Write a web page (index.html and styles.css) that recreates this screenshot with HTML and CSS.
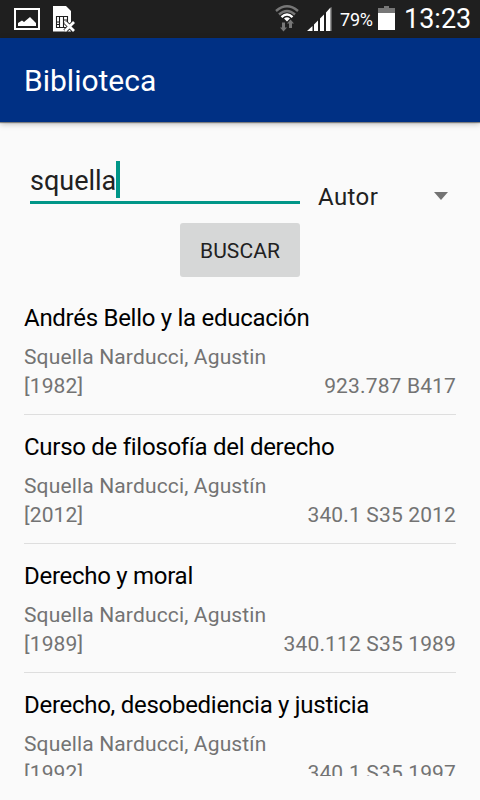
FILE: index.html
```html
<!DOCTYPE html>
<html lang="es">
<head>
    <meta charset="UTF-8">
    <title>Biblioteca</title>
    <link rel="stylesheet" href="styles.css">
</head>
<body>
    <div class="status-bar">
        <svg class="icon-image" width="26" height="22" viewBox="0 0 26 22">
            <path d="M1 1h24v20H1z" fill="none" stroke="#fff" stroke-width="2"/>
            <path d="M4 18v-3l4-2.500 2 1.500 6-5 3 3 3 3v3z" fill="#fff"/>
        </svg>
        <svg class="icon-sim" width="22" height="26" viewBox="0 0 22 26">
            <path d="M0 0h13l5 5v20.500H0z" fill="#fff"/>
            <path d="M3.500 10.500h11v11h-11zM6.500 10.500v11M10.500 10.500v11M3.500 16H6.500M10.500 14h4M3.500 18.500H6.500" fill="none" stroke="#1f1f1f" stroke-width="1.100"/>
            <path d="M12 16l9 9M21 16l-9 9" stroke="#1f1f1f" stroke-width="4.500"/>
            <path d="M12 16l9 9M21 16l-9 9" stroke="#fff" stroke-width="2.800"/>
        </svg>
        <svg class="icon-wifi" width="24" height="27" viewBox="0 0 24 27">
            <g fill="none" stroke-width="2.400">
                <path d="M1 6Q12-3.500 23 6" stroke="#777"/>
                <path d="M4 9.500Q12 2.500 20 9.500" stroke="#777"/>
                <path d="M6.500 12.200Q12 7 17.500 12.200" stroke="#fff"/>
            </g>
            <path d="M9 13.500q3-2.500 6 0l-3 3z" fill="#fff"/>
            <path d="M7 17.500h3v5h2L8.500 26.500 5 22.500h2zM14 23v-4.500h-2L15.500 14.500l3.500 4h-2V23z" fill="#777"/>
        </svg>
        <svg class="icon-signal" width="25" height="24" viewBox="0 0 25 24">
            <path d="M0 24l5.500-5V24zM7 24v-6.500l4-4V24zM13 24V11.500l4-4V24zM19 24V5.500L23 1v23z" fill="#fff"/>
            <path d="M23 1l1.500-1v24H23z" fill="#999"/>
        </svg>
        <span class="battery-level">79%</span>
        <svg class="icon-battery" width="17" height="24" viewBox="0 0 17 24">
            <path d="M6 0h5v2h6v5H0V2h6z" fill="#777"/>
            <path d="M0 7h17v17H0z" fill="#fff"/>
        </svg>
        <span class="clock">13:23</span>
    </div>

    <header class="toolbar">
        <h1>Biblioteca</h1>
    </header>

    <main class="content">
        <div class="search">
            <div class="search-input"><span>squella</span><i class="cursor"></i></div>
            <div class="spinner">
                <span>Autor</span>
                <i class="arrow"></i>
            </div>
        </div>
        <button class="search-button" type="button">BUSCAR</button>

        <ul class="results">
            <li>
                <h2>Andrés Bello y la educación</h2>
                <p>Squella Narducci, Agustin</p>
                <p class="detail"><span>[1982]</span><span>923.787 B417</span></p>
            </li>
            <li>
                <h2>Curso de filosofía del derecho</h2>
                <p>Squella Narducci, Agustín</p>
                <p class="detail"><span>[2012]</span><span>340.1 S35 2012</span></p>
            </li>
            <li>
                <h2>Derecho y moral</h2>
                <p>Squella Narducci, Agustin</p>
                <p class="detail"><span>[1989]</span><span>340.112 S35 1989</span></p>
            </li>
            <li>
                <h2>Derecho, desobediencia y justicia</h2>
                <p>Squella Narducci, Agustín</p>
                <p class="detail"><span>[1992]</span><span>340.1 S35 1997</span></p>
            </li>
        </ul>
    </main>
</body>
</html>
```
FILE: styles.css
```css
* {
    box-sizing: border-box;
}
body {
    display: flex;
    flex-direction: column;
    height: 800px;
    margin: 0;
    overflow: hidden;
    font-family: Roboto, sans-serif;
    background-color: #fafafa;
    color: #212121;
}
h1, h2, p, ul {
    margin: 0;
    padding: 0;
    font-weight: 400;
}

/* status bar */
.status-bar {
    display: flex;
    flex: none;
    align-items: flex-start;
    height: 38px;
    padding: 0 9px 0 14px;
    background-color: #1f1f1f;
    color: #fff;
    white-space: nowrap;
}
.icon-image {
    margin-top: 8px;
}
.icon-sim {
    margin: 6px 0 0 13px;
}
.icon-wifi {
    margin: 5px 0 0 auto;
}
.icon-signal {
    margin: 7px 0 0 8px;
}
.battery-level {
    width: 34px;
    margin-left: 8px;
    font-size: 18px;
    line-height: 39px;
    letter-spacing: -0.2px;
}
.icon-battery {
    margin: 6px 0 0 4px;
}
.clock {
    width: 67px;
    margin-left: 9px;
    font-size: 27px;
    line-height: 38px;
}

/* app bar */
.toolbar {
    flex: none;
    height: 84px;
    padding-left: 24px;
    background-color: #003084;
    color: #fff;
    box-shadow: 0 1px 1px rgba(0, 0, 0, 0.4), 0 2px 6px rgba(0, 0, 0, 0.25);
}
.toolbar h1 {
    font-size: 30px;
    line-height: 86px;
}

.content {
    display: flex;
    flex: 1;
    flex-direction: column;
    min-height: 0;
    padding: 24px;
}

/* search form */
.search {
    display: flex;
    flex: none;
    height: 71px;
    padding: 15px 0 0 6px;
}
.search-input {
    display: flex;
    width: 270px;
    height: 43px;
    border-bottom: 3px solid #009688;
    font-size: 27px;
    line-height: 40px;
}
.cursor {
    width: 4px;
    height: 37px;
    background-color: #009688;
}
.spinner {
    display: flex;
    flex: 1;
    align-items: center;
    justify-content: space-between;
    height: 48px;
    margin-top: 11px;
    padding: 0 8px 0 18px;
    font-size: 24px;
    letter-spacing: 0.4px;
}
.spinner span {
    padding-top: 2px;
}
.arrow {
    border: 7px solid transparent;
    border-top: 8px solid #737373;
    border-bottom: 0;
}
.search-button {
    flex: none;
    align-self: center;
    width: 120px;
    height: 54px;
    margin-top: 6px;
    padding: 2px 0 0;
    border: 0;
    border-radius: 3px;
    background-color: #d6d7d7;
    color: #212121;
    font: 21px Roboto, sans-serif;
    letter-spacing: 0.1px;
}

/* results list */
.results {
    flex: 1;
    min-height: 0;
    margin-top: 9px;
    overflow: hidden;
    list-style: none;
}
.results li {
    height: 129px;
    padding-top: 16px;
    border-bottom: 1px solid #dedede;
    color: #737373;
    font-size: 21px;
    line-height: 29px;
    letter-spacing: 0.15px;
}
.results h2 {
    margin-bottom: 9px;
    color: #000;
    font-size: 24px;
    line-height: 32px;
    letter-spacing: -0.28px;
}
.detail {
    display: flex;
    justify-content: space-between;
}
```
